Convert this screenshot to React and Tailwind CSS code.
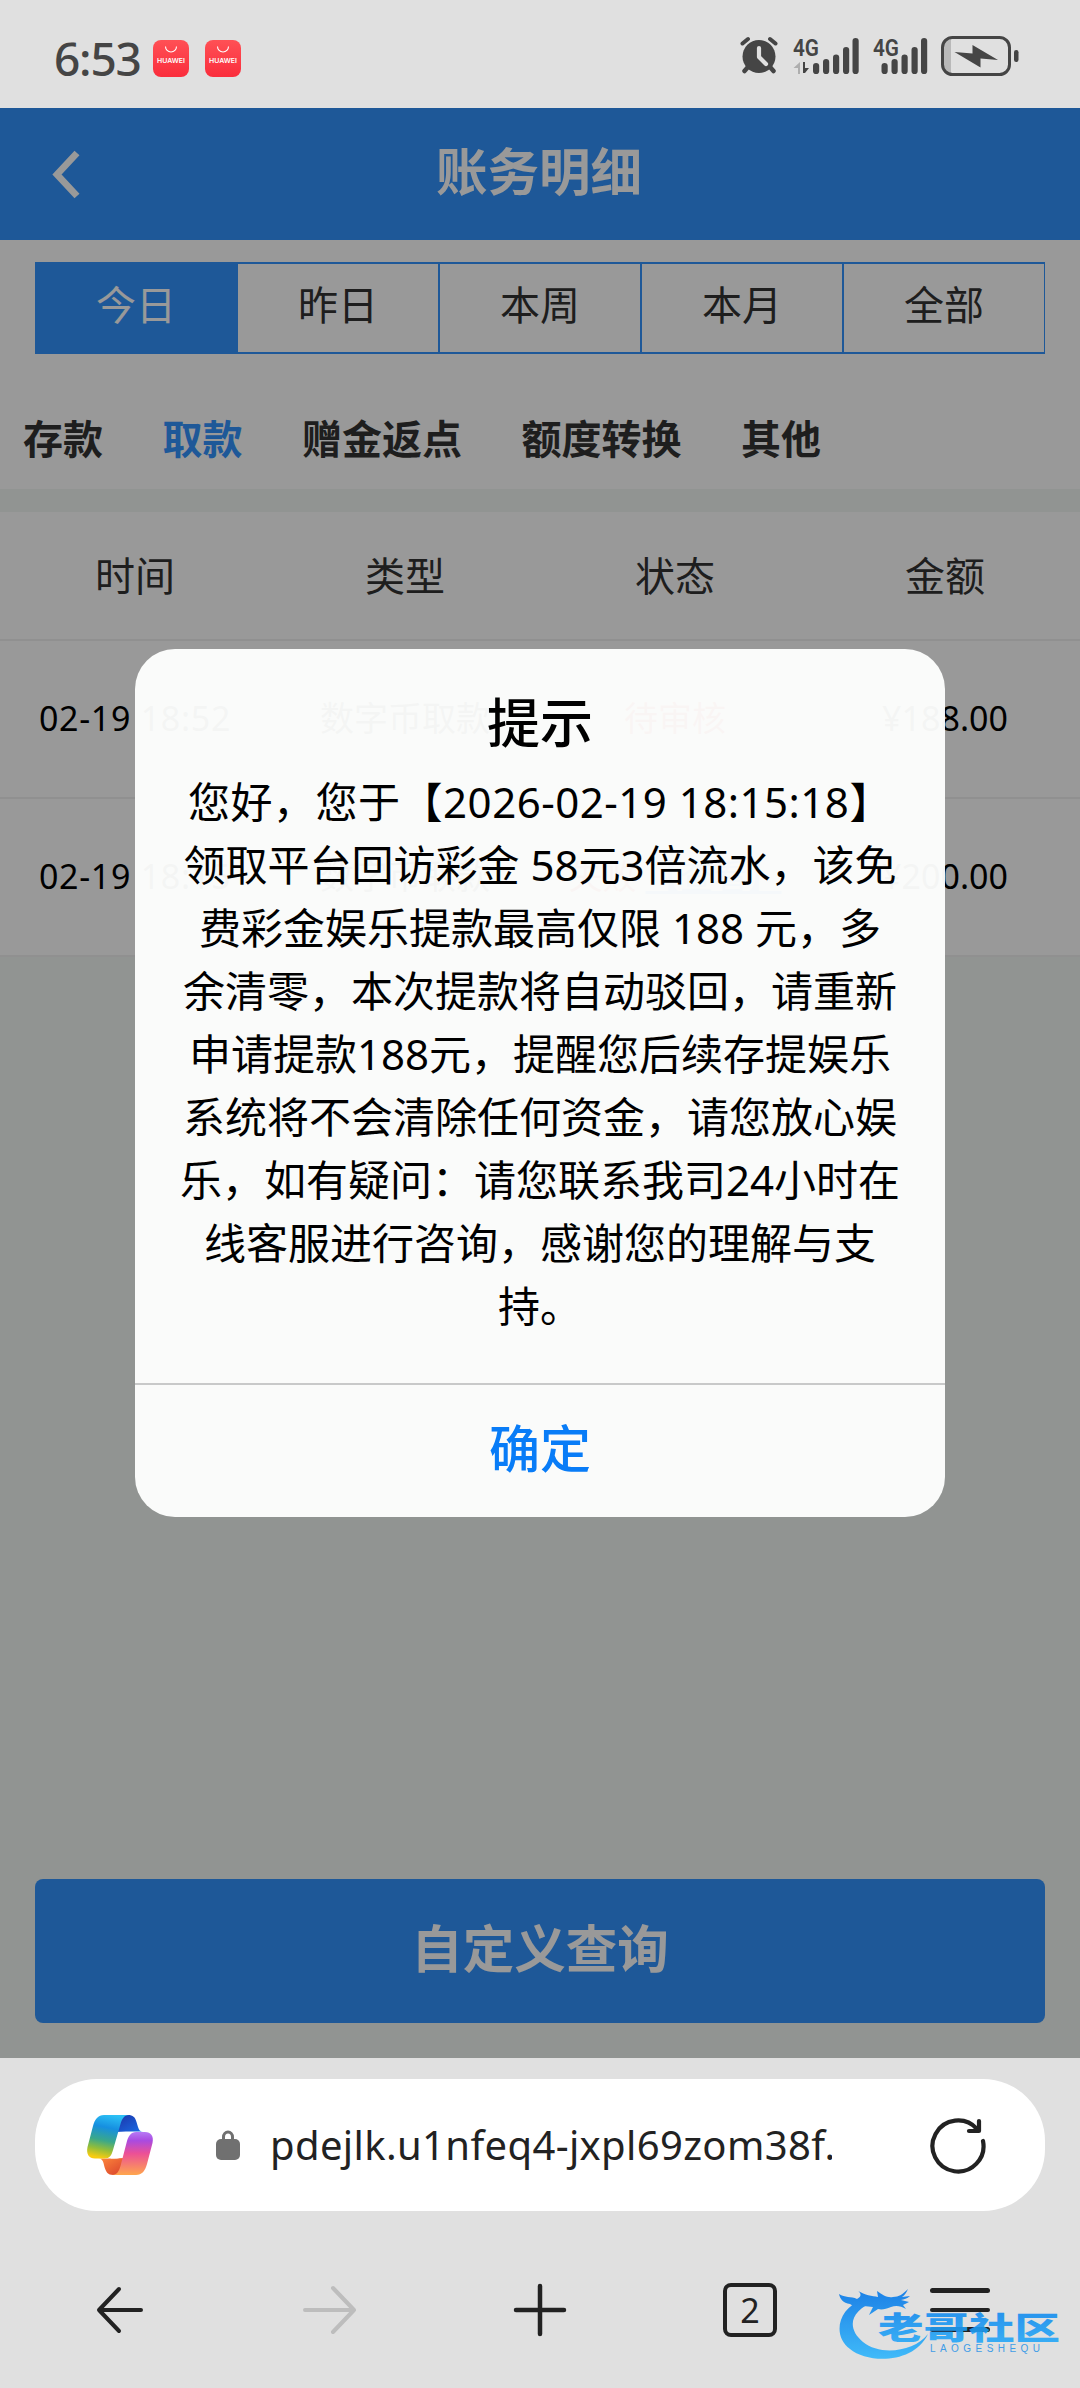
import { useState } from "react";

const ranges = ["今日", "昨日", "本周", "本月", "全部"];
const categories = ["存款", "取款", "赠金返点", "额度转换", "其他"];
const columns = ["时间", "类型", "状态", "金额"];

const records = [
    {time: "02-19 18:52", type: "数字币取款", status: "待审核", amount: "¥188.00"},
    {time: "02-19 18:15", type: "数字币取款", status: "失败", link: "【查看】", amount: "¥200.00"},
];

const messageLines = [
    "您好，您于【2026-02-19 18:15:18】",
    "领取平台回访彩金 58元3倍流水，该免",
    "费彩金娱乐提款最高仅限 188 元，多",
    "余清零，本次提款将自动驳回，请重新",
    "申请提款188元，提醒您后续存提娱乐",
    "系统将不会清除任何资金，请您放心娱",
    "乐，如有疑问：请您联系我司24小时在",
    "线客服进行咨询，感谢您的理解与支",
    "持。",
];

function HuaweiBadge() {
    return (
        <svg width="36" height="37" viewBox="0 0 36 37">
            <defs>
                <linearGradient id="hw" x1="0" y1="0" x2="0" y2="1">
                    <stop offset="0" stopColor="#ff5055" />
                    <stop offset="1" stopColor="#fa2d3c" />
                </linearGradient>
            </defs>
            <rect width="36" height="37" rx="8" fill="url(#hw)" />
            <path d="M12.5 6.5a5.5 5.5 0 0 0 11 0" fill="none" stroke="#fff" strokeWidth="1.1" />
            <text x="18" y="23.2" textAnchor="middle" textLength="28" lengthAdjust="spacingAndGlyphs" fontFamily="Inter, sans-serif" fontSize="6.6" fontWeight="600" fill="#fff">HUAWEI</text>
        </svg>
    );
}

function AlarmIcon() {
    return (
        <svg width="40" height="40" viewBox="0 0 40 40" fill="none" strokeLinecap="round">
            <circle cx="20" cy="20.5" r="16.5" fill="#454545" />
            <path d="M3.5 7.5 9 3M36.5 7.5 31 3" stroke="#454545" strokeWidth="4" />
            <path d="M9 31 5.5 35M31 31 34.5 35" stroke="#454545" strokeWidth="4.5" />
            <path d="M20 12v9l7 7" stroke="#e0e0e0" strokeWidth="4.2" strokeLinejoin="round" />
        </svg>
    );
}

function SignalIcon({ arrows }) {
    const bars = [
        [23, 26, 11],
        [33, 22, 15],
        [43, 17.5, 19.5],
        [53, 10, 27],
        [62.5, 1, 36],
    ];
    return (
        <svg className="overflow-visible" width="70" height="38" viewBox="0 0 70 38">
            <text x="0" y="18.5" textLength="26" lengthAdjust="spacingAndGlyphs" fontFamily="Roboto, sans-serif" fontSize="24" fontWeight="600" fill="#454545">4G</text>
            {arrows && <path d="M0.5 31 7 25v12H5v-6Z" fill="#aeaeae" />}
            {arrows && <path d="M10 25h2v6h4l-4 5h-2Z" fill="#454545" />}
            {bars.map(([x, y, h]) => (
                <rect key={x} x={arrows ? x - 3 : x - 14.5} y={y} width="6.2" height={h} rx="3.1" fill="#454545" />
            ))}
        </svg>
    );
}

function BatteryIcon() {
    return (
        <svg width="80" height="40" viewBox="0 0 80 40">
            <path d="M10 3v34c-5 0-8-4-8-8V11c0-4 3-8 8-8Z" fill="#b9b9b9" />
            <rect x="1.5" y="1.5" width="67" height="37" rx="10" fill="none" stroke="#454545" strokeWidth="3" />
            <rect x="73" y="14" width="4.500" height="12" rx="2.2" fill="#454545" />
            <path d="M13.5 16 31.5 17.5V9L57 24 39.5 22.5V31.5Z" fill="#454545" />
        </svg>
    );
}

function CopilotLogo() {
    return (
        <svg width="68" height="62" viewBox="0 0 68 62">
            <defs>
                <linearGradient id="cpA" x1="0.6" y1="0" x2="0.4" y2="1">
                    <stop offset="0" stopColor="#2cc0f5" />
                    <stop offset="0.3" stopColor="#168fe0" />
                    <stop offset="0.6" stopColor="#3aa88a" />
                    <stop offset="0.8" stopColor="#92bd3a" />
                    <stop offset="1" stopColor="#f8cc10" />
                </linearGradient>
                <linearGradient id="cpB" x1="0.5" y1="0" x2="0.5" y2="1">
                    <stop offset="0" stopColor="#b67af5" />
                    <stop offset="0.2" stopColor="#a94be0" />
                    <stop offset="0.5" stopColor="#ec5096" />
                    <stop offset="1" stopColor="#ffa64d" />
                </linearGradient>
                <linearGradient id="cpC" x1="0" y1="0" x2="1" y2="1">
                    <stop offset="0" stopColor="#1c33a8" />
                    <stop offset="1" stopColor="#1a6ee6" />
                </linearGradient>
                <linearGradient id="cpD" x1="0" y1="0" x2="1" y2="1">
                    <stop offset="0" stopColor="#ff8a3c" />
                    <stop offset="1" stopColor="#d8402c" />
                </linearGradient>
            </defs>
            <path d="M30 18 34 1h8c5 0 7 2 8.5 7l1.5 5c1 3 2 4.5 5 4.5H40Z" fill="url(#cpC)" />
            <path d="M38 44 34 61h-7c-5 0-7-3-8.5-8l-1-4c-1-3-2-4.5-5-4.5H28Z" fill="url(#cpD)" />
            <path d="M18 1h25c-5 0-7 4-8.5 9L27 36c-1.5 5-3 8.5-9 8.5h-9C3 44.5 0 40 1.5 33L7 12C9 5 12 1 18 1Z" fill="url(#cpA)" />
            <path d="M50 61H26c5 0 7-4 8.5-9L41 27c1.500-5 4-9 9-9h9c6 0 9 4 7.5 11L61 50c-2 7-5 11-11 11Z" fill="url(#cpB)" />
            <path d="M36 18.500H46c-4 1-5.500 4.500-6.500 8.500L35 42c-.8 1.800-2 2.500-4 2.500h-6.500c1.500-1.500 2.500-5 3.500-8.500l4-13c.8-2.500 2-4 4-4.500Z" fill="#fff" />
        </svg>
    );
}

function Watermark() {
    return (
        <svg className="opacity-90" width="226" height="78" viewBox="0 0 226 78">
            <defs>
                <linearGradient id="wm" gradientUnits="userSpaceOnUse" x1="0" y1="5" x2="0" y2="72">
                    <stop offset="0" stopColor="#0878e8" />
                    <stop offset="1" stopColor="#2fb6fc" />
                </linearGradient>
            </defs>
            <path d="M24 14C0 22-6 50 12 63c18 15 64 15 78-15C76 66 42 70 25 56 8 42 12 24 38 15Z" fill="url(#wm)" />
            <path d="M1 8c6 4 12 2 18 5C25 10 22 6 20 5c7 4 14 5 20 6L39 5c6 4 10 7 16 6 6 0 10-3 15-8-2 4-3 6-6 8l8-1c-3 3-6 3-9 4l8 2-6 3 3 4c-5-3-10-4-15-2-5 2-9 3-13 2l-9 6 4-8c-10-2-18 1-23-3C5 17 2 13 1 8Z" fill="url(#wm)" />
            <text x="40" y="53" textLength="182" lengthAdjust="spacingAndGlyphs" fontFamily="'Noto Sans CJK SC', sans-serif" fontSize="31" fontWeight="900" fill="url(#wm)">老哥社区</text>
            <text x="92" y="66" textLength="110" fontFamily="'Liberation Sans', sans-serif" fontSize="10" fill="#2e96e8">LAOGESHEQU</text>
        </svg>
    );
}

function StatusBar() {
    return (
        <div className="flex h-[108px] items-center justify-between bg-[#e0e0e0] pt-2 pr-[59px] pl-[54px] text-[#454545]">
            <div className="flex items-center">
                <span className="w-[99px] font-['Noto_Sans',sans-serif] text-[46px] leading-none font-medium tracking-[-1.2px]">6:53</span>
                <div className="flex gap-[16px]">
                    <HuaweiBadge />
                    <HuaweiBadge />
                </div>
            </div>
            <div className="flex items-center pb-1">
                <AlarmIcon />
                <div className="ml-[14px] w-[80px]"><SignalIcon arrows /></div>
                <div className="w-[68px]"><SignalIcon /></div>
                <BatteryIcon />
            </div>
        </div>
    );
}

function RecordsPage({ range, setRange, category, setCategory }) {
    return (
        <div className="flex h-full flex-col bg-[#f2f7f4]">
            <header className="flex h-[132px] shrink-0 items-center bg-[#3293fd] text-white">
                <svg className="ml-[52px]" width="30" height="50" viewBox="0 0 30 50">
                    <path d="M25 4 5 25.500l20 21.500" fill="none" stroke="currentColor" strokeWidth="6.8" />
                </svg>
                <h1 className="-ml-[84px] flex-1 pb-[5px] text-center text-[51.5px] leading-none font-bold">账务明细</h1>
            </header>

            <div className="h-[249px] shrink-0 bg-white pt-[22px]">
                <div className="mx-[35px] flex h-[92px] border-x border-y-2 border-[#3293fd]">
                    {ranges.map((item) => (
                        <button
                            key={item}
                            onClick={() => setRange(item)}
                            className={`flex-1 border-r-2 border-[#3293fd] pb-[6px] text-[40px] leading-none last:border-r-0 ${item === range ? "bg-[#3293fd] text-white" : "text-[#333]"}`}
                        >
                            {item}
                        </button>
                    ))}
                </div>
                <nav className="mt-[65px] flex gap-[59.5px] pl-[23px] text-[40px] leading-[40px] font-bold">
                    {categories.map((item) => (
                        <button key={item} onClick={() => setCategory(item)} className={item === category ? "text-[#3293fd]" : "text-[#333]"}>
                            {item}
                        </button>
                    ))}
                </nav>
            </div>

            <div className="mt-[23px] shrink-0 bg-white text-center">
                <div className="grid h-[129px] grid-cols-4 items-center border-b-2 border-[#f0f0f0] text-[40px] text-[#333]">
                    {columns.map((item) => <div key={item}>{item}</div>)}
                </div>
                {records.map((record) => (
                    <div key={record.time} className="grid h-[158px] grid-cols-4 items-center border-b-2 border-[#f0f0f0] pb-[2px] text-[34px] whitespace-nowrap text-black">
                        <div className="tracking-[0.7px]">{record.time}</div>
                        <div>{record.type}</div>
                        <div className="text-red-600">
                            {record.status}
                            {record.link && <a className="ml-[9px] text-[#3293fd] underline">{record.link}</a>}
                        </div>
                        <div>{record.amount}</div>
                    </div>
                ))}
            </div>

            <button className="mx-[35px] mt-auto mb-[35px] h-[144px] shrink-0 rounded-lg bg-[#3293fd] pb-[4px] text-[51.5px] font-bold text-white">
                自定义查询
            </button>
        </div>
    );
}

function NoticeDialog({ onClose }) {
    return (
        <div className="absolute inset-0 bg-black/40 pt-[541px]">
            <div className="mx-auto flex h-[868px] w-[810px] flex-col rounded-[40px] bg-[#fefffe]/96 text-center text-black">
                <h2 className="mt-[44px] text-[53px] leading-[60px] font-medium">提示</h2>
                <div className="mt-[17px] text-[42px] leading-[63px] whitespace-nowrap">
                    {messageLines.map((line) => (
                        <p key={line} className="first:tracking-[0.5px]">{line}</p>
                    ))}
                </div>
                <button onClick={onClose} className="mt-auto h-[134px] border-t-2 border-[#c8c9c9] pb-[5px] text-[51px] leading-none font-medium text-[#087cf7]">
                    确定
                </button>
            </div>
        </div>
    );
}

function BrowserBar() {
    return (
        <div className="h-[330px] bg-[#e0e0e0] pt-[21px] text-[#222]">
            <div className="mx-[35px] flex h-[132px] items-center rounded-[62px] bg-white pl-[51px]">
                <CopilotLogo />
                <svg className="ml-[62px]" width="24" height="31" viewBox="0 0 24 31">
                    <rect y="9" width="24" height="21" rx="5" fill="#707070" />
                    <path d="M7.5 12V7a4.5 5 0 0 1 9 0v5" fill="none" stroke="#707070" strokeWidth="3" />
                </svg>
                <div className="ml-[30px] w-[562px] overflow-hidden text-[40px] leading-[56px] tracking-[0.36px] whitespace-nowrap">pdejlk.u1nfeq4-jxpl69zom38f.</div>
                <svg className="ml-[96px]" width="60" height="60" viewBox="0 0 60 60" fill="none" stroke="currentColor" strokeWidth="4.2" strokeLinecap="round" strokeLinejoin="round">
                    <path d="M55 26A25.500 25.500 0 1 1 49 14" />
                    <path d="M51 6v10H41" />
                </svg>
            </div>
            <div className="grid h-[198px] grid-cols-5 items-center justify-items-center px-[15px]">
                <svg width="50" height="50" viewBox="0 0 50 50" fill="none" stroke="currentColor" strokeWidth="4" strokeLinecap="round" strokeLinejoin="round">
                    <path d="M46 25H4M24 4 4 25l20 21" />
                </svg>
                <svg width="56" height="50" viewBox="0 0 56 50" fill="none" stroke="#bdbdbd" strokeWidth="4" strokeLinecap="round" strokeLinejoin="round">
                    <path d="M3 25h49M31 3l21 22-21 22" />
                </svg>
                <svg width="54" height="54" viewBox="0 0 54 54" fill="none" stroke="currentColor" strokeWidth="4.5" strokeLinecap="round">
                    <path d="M27 3v48M3 27h48" />
                </svg>
                <div className="flex h-[54px] w-[54px] items-center justify-center rounded-[8px] border-4 border-[#222] text-[34px] leading-none">2</div>
                <div className="flex w-[60px] flex-col gap-[15px]">
                    <span className="h-[4.5px] rounded-full bg-[#222]" />
                    <span className="h-[4.5px] rounded-full bg-[#222]" />
                    <span className="h-[4.5px] rounded-full bg-[#222]" />
                </div>
            </div>
        </div>
    );
}

function App() {
    const [range, setRange] = useState("今日");
    const [category, setCategory] = useState("取款");
    const [open, setOpen] = useState(true);

    return (
        <div lang="zh-CN" className="relative h-[2388px] w-[1080px] overflow-hidden font-['Noto_Sans','Noto_Sans_CJK_SC',sans-serif]">
            <StatusBar />
            <main className="relative h-[1950px]">
                <RecordsPage range={range} setRange={setRange} category={category} setCategory={setCategory} />
                {open && <NoticeDialog onClose={() => setOpen(false)} />}
            </main>
            <BrowserBar />
            <div className="pointer-events-none absolute right-[16px] bottom-[24px]">
                <Watermark />
            </div>
        </div>
    );
}

export default App;
